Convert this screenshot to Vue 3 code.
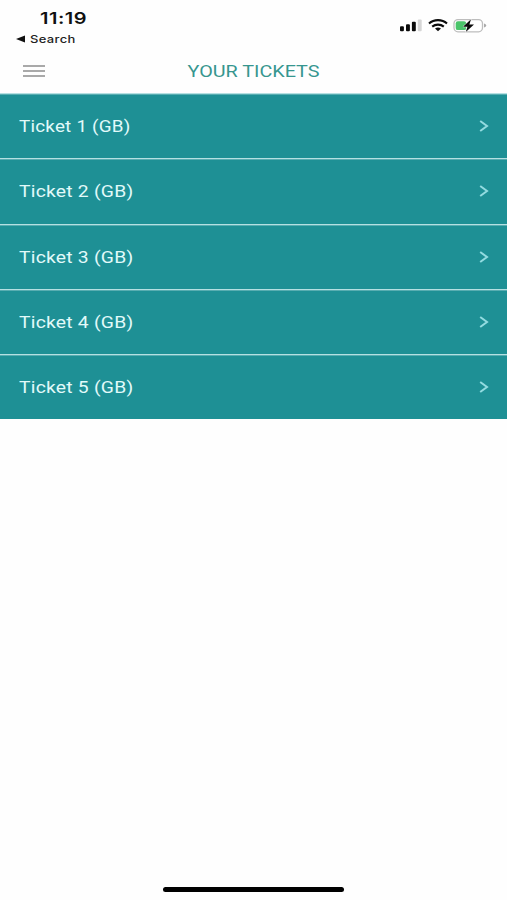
<script setup>
const tickets = [1, 2, 3, 4, 5].map((n) => ({ id: n, label: `Ticket ${n} (GB)` }))
</script>

<template>
  <div class="screen">
    <header class="status">
      <div class="left">
        <span class="time">11:19</span>
        <div class="back">
          <svg width="9" height="8" viewBox="0 0 9 8"><path d="M0 4 9 .4v7.2z" fill="#111" /></svg>
          <span class="back-label">Search</span>
        </div>
      </div>
      <svg class="indicators" width="90" height="20" viewBox="0 0 90 20">
        <g fill="#0b0b0b">
          <rect x="1" y="11.3" width="3.9" height="4.9" rx="1" />
          <rect x="7" y="9.3" width="3.9" height="6.9" rx="1" />
          <rect x="12.9" y="6.8" width="3.9" height="9.4" rx="1" />
          <rect x="18.8" y="4.6" width="3.9" height="11.6" rx="1" fill="#d6d6d6" />
        </g>
        <g fill="none" stroke="#0b0b0b" stroke-width="2.1">
          <path d="M30 8.500C35 4 43 4 48 8.500" />
          <path d="M33.200 11.600C36.500 8.900 41.500 8.900 44.800 11.600" />
        </g>
        <path d="M36 13.500c1.900-1.400 4.100-1.400 6 0L39 16.200z" fill="#0b0b0b" />
        <rect x="55" y="4.600" width="28.500" height="12.200" rx="4" fill="#fff" stroke="#bdbdbd" stroke-width="1.300" />
        <rect x="56.700" y="6.300" width="10.500" height="8.800" rx="2.200" fill="#4bc56b" />
        <path d="M85 8.600q2.200.4 2.200 2t-2.200 2z" fill="#aaa" />
        <path d="M72 4.300 64 11.700h4.400L66.800 17 75 9.600h-4.600z" fill="#0b0b0b" stroke="#fff" stroke-width="1" paint-order="stroke" />
      </svg>
    </header>

    <nav class="bar">
      <div class="menu"><i></i><i></i><i></i></div>
      <h1>YOUR TICKETS</h1>
    </nav>

    <ul class="list">
      <li v-for="t in tickets" :key="t.id">
        <span class="label" :class="{ narrow: t.id === 1 }">{{ t.label }}</span>
        <svg width="10" height="14" viewBox="0 0 10 14">
          <path d="M1.200 2 8 7 1.200 12" fill="none" stroke="#93dbe0" stroke-width="2" />
        </svg>
      </li>
    </ul>

    <footer><div class="home"></div></footer>
  </div>
</template>

<style>
body {
  background: #fff;
}
</style>

<style scoped>
.screen {
  display: flex;
  flex-direction: column;
  width: 507px;
  height: 900px;
  overflow: hidden;
  background: #fefefe;
  font-family: Roboto, "Liberation Sans", sans-serif;
}
.status {
  display: flex;
  justify-content: space-between;
  height: 50px;
  font-family: Inter, sans-serif;
}
.left {
  padding: 9px 0 0 16px;
}
.time {
  display: block;
  width: max-content;
  margin-left: 24px;
  font-size: 15.5px;
  line-height: 20px;
  font-weight: 600;
  color: #111;
  letter-spacing: 0.4px;
  transform: scaleX(1.29);
  transform-origin: left;
}
.back {
  display: flex;
  align-items: center;
  gap: 5px;
  height: 20px;
}
.back-label {
  font-size: 11px;
  line-height: 20px;
  font-weight: 500;
  color: #222;
  letter-spacing: 0.3px;
  transform: scaleX(1.18);
  transform-origin: left;
}
.indicators {
  margin: 15px 18px 0 0;
}
.bar {
  display: grid;
  grid-template-columns: 60px 1fr 60px;
  align-items: center;
  height: 43px;
}
.menu {
  display: flex;
  flex-direction: column;
  gap: 3px;
  width: 22px;
  margin: -1px 0 0 23px;
}
.menu i {
  height: 2px;
  background: #a9a9a9;
}
h1 {
  margin: 0;
  text-align: center;
  font-size: 16px;
  line-height: 20px;
  font-weight: 400;
  color: #36968f;
  transform: scaleX(1.235);
}
.list {
  margin: 0;
  padding: 0;
  list-style: none;
}
li {
  display: flex;
  align-items: center;
  justify-content: space-between;
  box-sizing: border-box;
  height: 65.25px;
  padding: 0 18px 0 19px;
  border-top: 1px solid #b5e0e2;
  background: linear-gradient(#58adb1 1px, #1e9095 1px);
}
.label {
  padding-top: 2px;
  font-size: 16px;
  line-height: 20px;
  color: #e2fafa;
  letter-spacing: 0.2px;
  transform: scaleX(1.205);
  transform-origin: left;
}
.label.narrow {
  transform: scaleX(1.175);
}
footer {
  display: flex;
  justify-content: center;
  margin-top: auto;
  padding-bottom: 8px;
}
.home {
  width: 181px;
  height: 5px;
  border-radius: 3px;
  background: #000;
}
</style>
